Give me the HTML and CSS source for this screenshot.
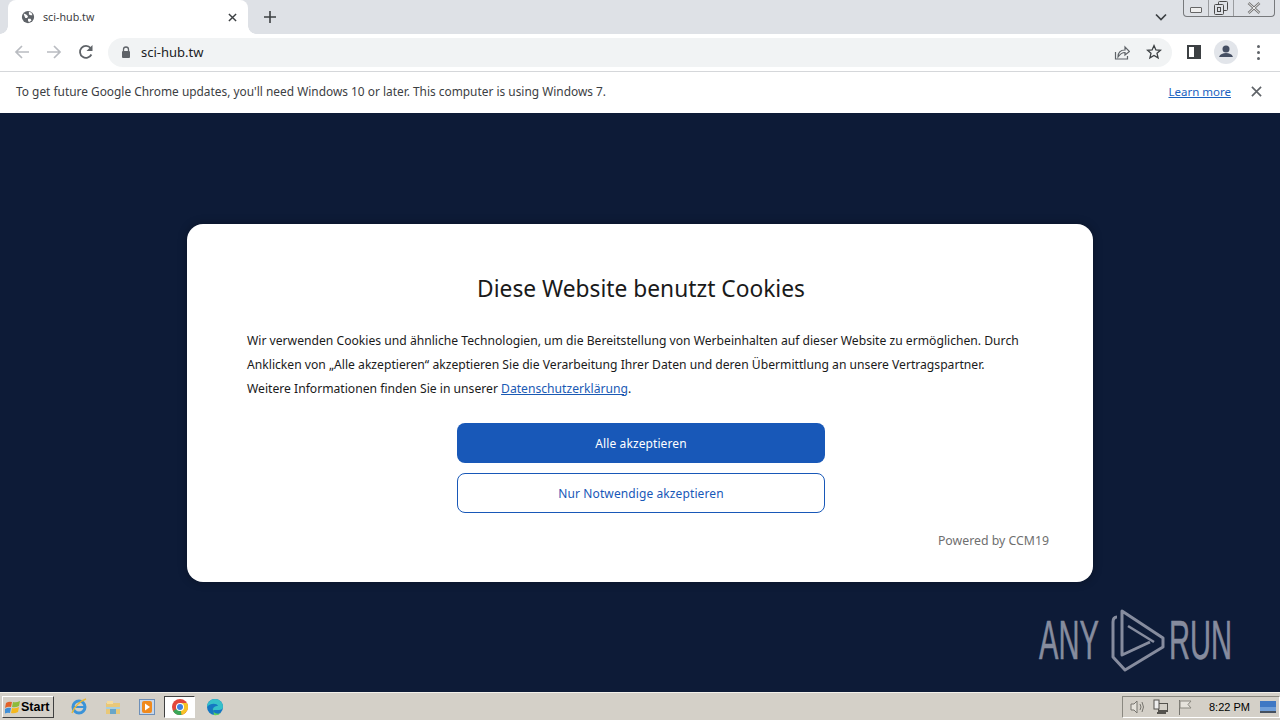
FILE: index.html
```html
<!DOCTYPE html>
<html lang="de">
<head>
    <meta charset="UTF-8">
    <meta name="viewport" content="width=device-width, initial-scale=1.0">
    <title>sci-hub.tw</title>
    <link rel="stylesheet" href="styles.css">
</head>
<body>

<div class="tabstrip">
    <div class="tab">
        <svg class="favicon" viewBox="0 0 16 16"><circle cx="8" cy="8" r="7" fill="#5f6368"/><path d="M3 4l3 1 2 2-1 2-2 0-1-2zM9 2l3 1 1 3-2 0-2-1zM8 10l3 0 1 2-3 2-1-2z" fill="#fff"/></svg>
        <span class="tab-title">sci-hub.tw</span>
        <svg class="tab-close" viewBox="0 0 10 10"><path d="M1 1l8 8M9 1l-8 8" stroke="#3c4043" stroke-width="1.6"/></svg>
    </div>
    <svg class="new-tab" viewBox="0 0 12 12"><path d="M6 0v12M0 6h12" stroke="#3c4043" stroke-width="1.6"/></svg>
    <svg class="tab-list" viewBox="0 0 12 8"><path d="M1 1.5l5 5 5-5" fill="none" stroke="#3c4043" stroke-width="1.7"/></svg>
    <div class="win-controls">
        <div class="win-btn win-min"><span class="min-glyph"></span></div>
        <div class="win-btn win-max">
            <svg viewBox="0 0 14 14" width="14" height="14"><rect x="4.5" y="0.5" width="9" height="9" rx="1" fill="#dee1e6" stroke="#4a4a4a"/><rect x="0.5" y="3.5" width="9" height="10" rx="1" fill="#dee1e6" stroke="#4a4a4a"/><rect x="3.5" y="6.5" width="3" height="4" fill="none" stroke="#4a4a4a"/></svg>
        </div>
        <div class="win-btn win-close">
            <svg viewBox="0 0 14 12" width="14" height="12"><path d="M1.5 1l11 10M12.5 1l-11 10" stroke="#777" stroke-width="2.6"/><path d="M1.5 1l11 10M12.5 1l-11 10" stroke="#eee" stroke-width="1"/></svg>
        </div>
    </div>
</div>

<div class="toolbar">
    <svg class="nav-icon" viewBox="0 0 16 16"><path d="M15 8H2M8 2L2 8l6 6" fill="none" stroke="#b9bcc1" stroke-width="1.7"/></svg>
    <svg class="nav-icon" viewBox="0 0 16 16"><path d="M1 8h13M8 2l6 6-6 6" fill="none" stroke="#b9bcc1" stroke-width="1.7"/></svg>
    <svg class="nav-icon" viewBox="0 0 16 16"><path d="M13.4 10.5A6 6 0 1 1 12.6 4" fill="none" stroke="#5f6368" stroke-width="1.8"/><path d="M14.5 1v6h-6z" fill="#5f6368"/></svg>
    <div class="omnibox">
        <svg class="lock" viewBox="0 0 10 12"><path d="M2.5 5V3.5a2.5 2.5 0 0 1 5 0V5" fill="none" stroke="#5f6368" stroke-width="1.3"/><rect x="1" y="5" width="8" height="7" rx="1" fill="#5f6368"/></svg>
        <span class="url">sci-hub.tw</span>
        <svg class="omni-icon share" viewBox="0 0 16 16"><path d="M1.5 8v7h12v-3" fill="none" stroke="#5f6368" stroke-width="1.2"/><path d="M4 13c0-5 3-7 7-7V3l4.500 4.500L11 11V8.500c-3 0-5 1.500-7 4.500z" fill="none" stroke="#5f6368" stroke-width="1.2"/></svg>
        <svg class="omni-icon star" viewBox="0 0 16 16"><path d="M8 1.600l1.900 4.300 4.600.4-3.500 3 1.100 4.600L8 11.500l-4.100 2.400L5 9.300l-3.500-3 4.600-.4z" fill="none" stroke="#3c4043" stroke-width="1.300"/></svg>
    </div>
    <div class="side-panel"><span class="side-fill"></span></div>
    <div class="avatar">
        <svg viewBox="0 0 24 24" width="24" height="24"><circle cx="12" cy="12" r="12" fill="#e2e5ea"/><circle cx="12" cy="9" r="3.500" fill="#454f63"/><path d="M5 17c1-3 4-4 7-4s6 1 7 4z" fill="#454f63"/></svg>
    </div>
    <div class="menu-dots"><span></span><span></span><span></span></div>
</div>

<div class="infobar">
    <span class="info-text">To get future Google Chrome updates, you'll need Windows 10 or later. This computer is using Windows 7.</span>
    <a class="learn-more" href="#">Learn more</a>
    <svg class="info-close" viewBox="0 0 12 12"><path d="M1 1l10 10M11 1L1 11" stroke="#5f6368" stroke-width="1.800"/></svg>
</div>

<main class="page">
    <div class="cookie-card">
        <h1>Diese Website benutzt Cookies</h1>
        <p>Wir verwenden Cookies und ähnliche Technologien, um die Bereitstellung von Werbeinhalten auf dieser Website zu ermöglichen. Durch Anklicken von „Alle akzeptieren“ akzeptieren Sie die Verarbeitung Ihrer Daten und deren Übermittlung an unsere Vertragspartner. Weitere Informationen finden Sie in unserer <a href="#">Datenschutzerklärung</a>.</p>
        <div class="buttons">
            <button class="btn btn-primary">Alle akzeptieren</button>
            <button class="btn btn-outline">Nur Notwendige akzeptieren</button>
        </div>
        <div class="powered">Powered by CCM19</div>
    </div>

    <div class="watermark">
        <span class="wm-text">ANY</span>
        <svg class="wm-logo" viewBox="0 0 70 70"><path d="M17 12Q13 12 13 17V52L25 65 63 42V33L22 6V50L50 37" fill="none" stroke="#868c9e" stroke-width="3" stroke-linejoin="round"/><path d="M28 21L54 37" fill="none" stroke="#868c9e" stroke-width="2.600"/></svg>
        <span class="wm-text">RUN</span>
    </div>
</main>

<div class="taskbar">
    <div class="start-btn">
        <svg viewBox="0 0 16 14" width="16" height="14"><path d="M1 3q3-2 6-1l-1 5q-3-1-6 1z" fill="#e2622a"/><path d="M8 2q3 1 7-1l-1 5q-4 2-7 1z" fill="#8dbb3c"/><path d="M0 9q3-2 6-1l-1 5q-3-1-6 1z" fill="#3f8fd8"/><path d="M7 8q3 1 7-1l-1 5q-4 2-7 1z" fill="#f5b81e"/></svg>
        <span>Start</span>
    </div>
    <div class="quick-launch">
        <span class="ql-item">
            <svg viewBox="0 0 18 18" width="18" height="18"><circle cx="9" cy="9" r="6" fill="none" stroke="#3b93d8" stroke-width="3"/><path d="M4 8h11v2H4z" fill="#3b93d8"/><path d="M2 15C5 8 10 3 16 1" fill="none" stroke="#e8b93a" stroke-width="1.500"/></svg>
        </span>
        <span class="ql-item">
            <svg viewBox="0 0 18 18" width="18" height="18"><path d="M2 5h14v11H2z" fill="#e9c878"/><path d="M3 3h6v3H3z" fill="#f4dc9f"/><path d="M6 10h6v6H6z" fill="#6aa6c8"/><path d="M2 9h14v2H2z" fill="#a8cfe0"/></svg>
        </span>
        <span class="ql-item">
            <svg viewBox="0 0 18 18" width="18" height="18"><rect x="1.500" y="1.500" width="15" height="15" fill="#c7d7ea" stroke="#6d8fb8"/><rect x="4" y="3" width="10" height="12" rx="2" fill="#f08a1d"/><path d="M7 5.500v7l5-3.500z" fill="#fff"/></svg>
        </span>
        <span class="ql-item">
            <span class="ql-active">
                <svg viewBox="0 0 18 18" width="18" height="18"><circle cx="9" cy="9" r="8" fill="#e2473a"/><path d="M9 9L2 13A8 8 0 0 0 11 16.700z" fill="#3aa757"/><path d="M9 5h7a8 8 0 0 1-5.500 11.800z" fill="#f7c325"/><circle cx="9" cy="9" r="4" fill="#fff"/><circle cx="9" cy="9" r="3" fill="#3f7fe0"/></svg>
            </span>
        </span>
        <span class="ql-item">
            <svg viewBox="0 0 18 18" width="18" height="18"><circle cx="9" cy="9" r="8" fill="#1577c2"/><path d="M1 9a8 8 0 0 1 16 0c0 2-2 3-4 3H7c0-3 2-4 5-4-1-3-8-3-11 1z" fill="#35c0c9"/><path d="M7 10c-1 4 3 7 8 5a8 8 0 0 1-7 2z" fill="#5dd35d"/></svg>
        </span>
    </div>
    <div class="tray">
        <svg viewBox="0 0 16 16" width="16" height="16"><path d="M2 5h3l3-3v12l-3-3H2z" fill="#e6e3dc" stroke="#77756f"/><path d="M11 5q2 3 0 6M13 3q3 5 0 10" fill="none" stroke="#77756f"/></svg>
        <svg viewBox="0 0 16 16" width="16" height="16"><rect x="5" y="4" width="10" height="9" fill="#55534e"/><rect x="6" y="5" width="8" height="6" fill="#d4d0c8"/><rect x="1" y="1" width="5" height="9" fill="#eee" stroke="#55534e"/><path d="M4 13h9v2H4z" fill="#55534e"/></svg>
        <svg viewBox="0 0 16 16" width="16" height="16"><path d="M2.500 1v15" stroke="#77756f"/><path d="M3 2h11l-3 3.500 3 3.500H3z" fill="#e6e3dc" stroke="#8a8880"/></svg>
        <span class="clock">8:22 PM</span>
        <svg class="show-desktop" viewBox="0 0 16 12" width="16" height="12"><rect width="16" height="10" fill="#3f78c4"/><rect y="6" width="16" height="4" fill="#6f9ed8"/><rect y="10" width="16" height="2" fill="#45505f"/></svg>
    </div>
</div>

</body>
</html>
```

FILE: styles.css
```css
* {
    box-sizing: border-box;
}
html, body {
    height: 100%;
}
body {
    margin: 0;
    width: 1280px;
    height: 720px;
    overflow: hidden;
    display: flex;
    flex-direction: column;
    font-family: "Noto Sans", sans-serif;
    background-color: #0d1b37;
}
svg {
    display: block;
    flex: none;
}

/* chrome tabs */
.tabstrip {
    height: 34px;
    flex: none;
    display: flex;
    background-color: #dee1e6;
}
.tab {
    position: relative;
    width: 240px;
    margin-left: 8px;
    padding: 0 0 0 13px;
    display: flex;
    align-items: center;
    background-color: white;
    border-radius: 8px 8px 0 0;
}
.tab::before,
.tab::after {
    content: "";
    position: absolute;
    bottom: 0;
    width: 8px;
    height: 8px;
}
.tab::before {
    left: -8px;
    background: radial-gradient(circle at 0 0, transparent 7.5px, white 8px);
}
.tab::after {
    right: -8px;
    background: radial-gradient(circle at 100% 0, transparent 7.5px, white 8px);
}
.favicon {
    width: 14px;
    height: 14px;
}
.tab-title {
    margin-left: 8px;
    font-size: 10.7px;
    color: #3c4043;
    flex: 1;
}
.tab-close {
    width: 9px;
    height: 9px;
    margin-right: 11px;
}
.new-tab {
    width: 12px;
    height: 12px;
    margin: 11px 0 0 16px;
}
.tab-list {
    width: 12px;
    height: 8px;
    margin: 13px 0 0 879px;
}
.win-controls {
    margin-left: 16px;
    width: 92px;
    height: 17px;
    display: flex;
    border: 1px solid #77797c;
    border-top: none;
    border-radius: 0 0 4px 4px;
    overflow: hidden;
}
.win-btn {
    display: flex;
    align-items: center;
    justify-content: center;
    border-right: 1px solid #9a9c9f;
}
.win-min {
    width: 25px;
}
.min-glyph {
    width: 12px;
    height: 6px;
    margin-top: 4px;
    border: 1px solid #666;
    border-radius: 1px;
    background-color: #eee;
}
.win-max {
    width: 25px;
}
.win-close {
    flex: 1;
    border-right: none;
}

/* toolbar */
.toolbar {
    height: 38px;
    flex: none;
    display: flex;
    align-items: center;
    padding: 0 0 1px 14px;
    background-color: white;
    border-bottom: 1px solid #d5d7da;
}
.nav-icon {
    width: 16px;
    height: 16px;
    margin-right: 16px;
}
.omnibox {
    width: 1064px;
    height: 29px;
    margin-left: -2px;
    padding: 0 10px 0 13px;
    display: flex;
    align-items: center;
    background-color: #f1f3f4;
    border-radius: 15px;
}
.lock {
    width: 10px;
    height: 12px;
}
.url {
    margin-left: 10px;
    flex: 1;
    font-size: 13px;
    color: #202124;
}
.omni-icon {
    width: 16px;
    height: 16px;
}
.star {
    margin-left: 16px;
}
.side-panel {
    width: 14px;
    height: 14px;
    margin-left: 15px;
    border: 2px solid #3c4043;
    display: flex;
    justify-content: flex-end;
}
.side-fill {
    width: 5px;
    background-color: #3c4043;
}
.avatar {
    margin-left: 13px;
}
.menu-dots {
    margin-left: 19px;
    display: flex;
    flex-direction: column;
    gap: 3px;
}
.menu-dots span {
    width: 3px;
    height: 3px;
    border-radius: 50%;
    background-color: #5f6368;
}

/* update bar */
.infobar {
    height: 41px;
    flex: none;
    display: flex;
    align-items: center;
    padding: 0 18px 3px 16px;
    background-color: white;
    font-size: 11.9px;
    color: #3c4043;
}
.info-text {
    flex: 1;
}
.learn-more {
    font-size: 11.5px;
    color: #1a62c0;
}
.info-close {
    width: 11px;
    height: 11px;
    margin-left: 20px;
}

/* page */
.page {
    flex: 1;
    position: relative;
    display: flex;
    align-items: center;
    justify-content: center;
    background-color: #0d1b37;
}
.cookie-card {
    width: 906px;
    height: 358px;
    padding: 50px 44px 0 60px;
    background-color: white;
    border-radius: 16px;
    box-shadow: 0 0 10px rgba(0, 0, 0, 0.3);
    color: #1a1a1a;
}
h1 {
    margin: 0;
    padding-right: 14px;
    font-size: 22.75px;
    line-height: 30px;
    font-weight: normal;
    text-align: center;
}
p {
    margin: 25px 26px 0 0;
    font-size: 12.15px;
    line-height: 24px;
}
p a {
    color: #1a5ab4;
}
.buttons {
    margin: 22px 0 0 -14px;
    display: flex;
    flex-direction: column;
    align-items: center;
    gap: 10px;
}
.btn {
    width: 368px;
    height: 40px;
    padding: 2px 0 0;
    border-radius: 8px;
    font-family: inherit;
    font-size: 12px;
    letter-spacing: 0.1px;
}
.btn-primary {
    background-color: #1858b8;
    border: none;
    color: white;
}
.btn-outline {
    background-color: white;
    border: 1px solid #1858b8;
    color: #1858b8;
}
.powered {
    margin-top: 19px;
    text-align: right;
    font-size: 12.3px;
    color: #6f6f6f;
}

/* sandbox watermark */
.watermark {
    position: absolute;
    right: 50px;
    bottom: 17px;
    width: 190px;
    height: 70px;
    display: flex;
    align-items: center;
    color: #868c9e;
}
.wm-text {
    width: 60px;
    margin-left: -1px;
    margin-right: 1px;
    font-family: "Liberation Sans", sans-serif;
    font-size: 56px;
    line-height: 62px;
    transform: scaleX(0.52);
    transform-origin: left center;
    white-space: nowrap;
    -webkit-text-stroke: 0.6px #868c9e;
}
.wm-logo {
    width: 70px;
    height: 70px;
}

/* windows taskbar */
.taskbar {
    height: 28px;
    flex: none;
    display: flex;
    align-items: center;
    padding: 1px 0 0 2px;
    background-color: #d4d0c8;
    border-top: 1px solid #f2f0ea;
}
.start-btn {
    width: 52px;
    height: 22px;
    padding-left: 2px;
    display: flex;
    align-items: center;
    background-color: #d4d0c8;
    border: 1px solid;
    border-color: #fff #404040 #404040 #fff;
    font-family: "Liberation Sans", sans-serif;
    font-size: 12.5px;
    font-weight: bold;
    color: black;
}
.quick-launch {
    margin-left: 8px;
    display: flex;
    align-items: center;
}
.ql-item {
    width: 34px;
    height: 24px;
    display: flex;
    align-items: center;
    justify-content: center;
}
.ql-active {
    flex: none;
    width: 31px;
    height: 22px;
    margin-left: -3px;
    display: flex;
    align-items: center;
    justify-content: center;
    background-color: white;
    border: 1px solid;
    border-color: #404040 #fff #fff #404040;
}
.tray {
    margin-left: auto;
    width: 158px;
    height: 22px;
    padding: 0 0 0 6px;
    display: flex;
    align-items: center;
    gap: 8px;
    border: 1px solid;
    border-color: #8a8880 #fff #fff #8a8880;
    font-family: "Liberation Sans", sans-serif;
    font-size: 11px;
    color: black;
}
.clock {
    margin-left: 8px;
    white-space: nowrap;
}
.show-desktop {
    margin-left: auto;
    margin-right: 3px;
}
```
